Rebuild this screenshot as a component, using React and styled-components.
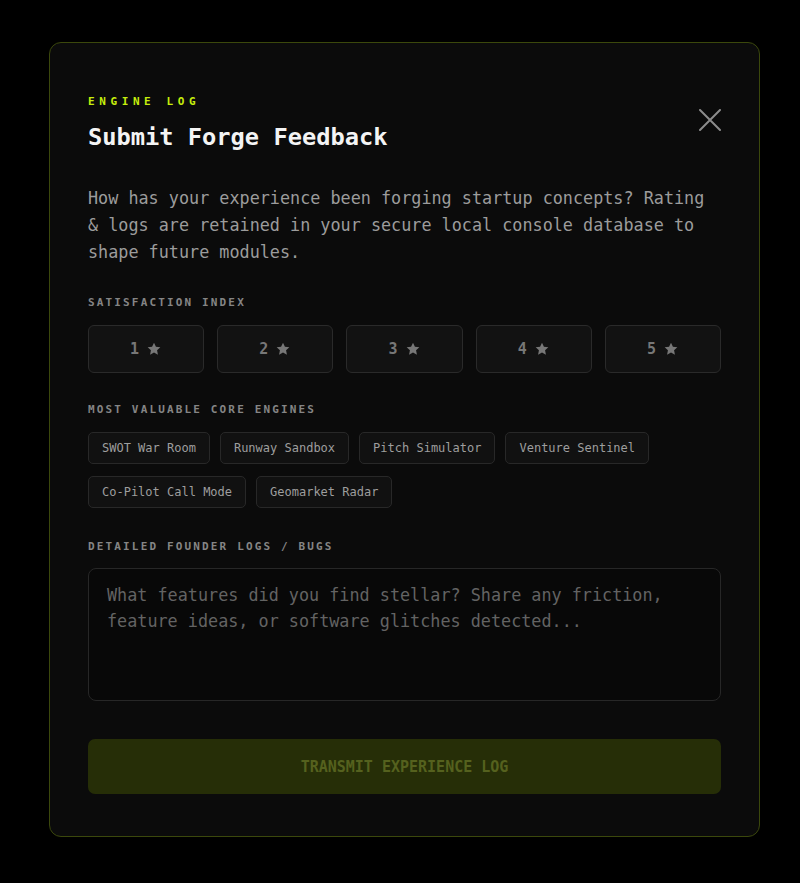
import styled, { createGlobalStyle } from 'styled-components';

const GlobalStyle = createGlobalStyle`
  body {
    margin: 0;
    background: #000;
    font-family: "DejaVu Sans Mono", "Liberation Mono", monospace;
  }
`;

const ratings = [1, 2, 3, 4, 5];
const engines = [
  'SWOT War Room',
  'Runway Sandbox',
  'Pitch Simulator',
  'Venture Sentinel',
  'Co-Pilot Call Mode',
  'Geomarket Radar',
];

function Estrela() {
  return (
    <svg width="16" height="16" viewBox="0 0 24 24">
      <path
        d="M12 2.5l2.9 6.1 6.6.8-4.9 4.6 1.3 6.6L12 17.3l-5.9 3.3 1.3-6.6-4.9-4.6 6.6-.8z"
        fill="currentColor"
      />
    </svg>
  );
}

export default function App() {
  return (
    <>
      <GlobalStyle />
      <Pagina>
        <Cartao>
          <Cabecalho>
            <div>
              <Rotulo>ENGINE LOG</Rotulo>
              <Titulo>Submit Forge Feedback</Titulo>
            </div>
            <Fechar aria-label="Fechar">
              <svg width="22" height="22" viewBox="0 0 22 22" fill="none">
                <path d="M1 1L21 21M21 1L1 21" stroke="#8c8c8c" strokeWidth="2" strokeLinecap="round" />
              </svg>
            </Fechar>
          </Cabecalho>

          <Descricao>
            How has your experience been forging startup concepts? Rating &amp; logs are retained in
            your secure local console database to shape future modules.
          </Descricao>

          <Secao>
            <Legenda>SATISFACTION INDEX</Legenda>
            <Notas>
              {ratings.map((n) => (
                <Nota key={n}>
                  <span>{n}</span>
                  <Estrela />
                </Nota>
              ))}
            </Notas>
          </Secao>

          <Secao>
            <Legenda>MOST VALUABLE CORE ENGINES</Legenda>
            <Chips>
              {engines.map((e) => (
                <Chip key={e}>{e}</Chip>
              ))}
            </Chips>
          </Secao>

          <Secao topo={31} gap={13}>
            <Legenda>DETAILED FOUNDER LOGS / BUGS</Legenda>
            <Campo placeholder="What features did you find stellar? Share any friction, feature ideas, or software glitches detected..." />
          </Secao>

          <Enviar disabled>TRANSMIT EXPERIENCE LOG</Enviar>
        </Cartao>
      </Pagina>
    </>
  );
}

const Pagina = styled.div`
  padding: 42px 0 46px 49px;
`;

const Cartao = styled.div`
  box-sizing: border-box;
  width: 711px;
  padding: 51px 38px 42px;
  background: #0b0b0b;
  border: 1px solid #3b480c;
  border-radius: 12px;
  display: flex;
  flex-direction: column;
`;

const Cabecalho = styled.div`
  display: flex;
  justify-content: space-between;
  align-items: flex-start;
`;

const Rotulo = styled.div`
  font-size: 11px;
  line-height: 16px;
  font-weight: bold;
  letter-spacing: 4.6px;
  color: #c6ee0c;
`;

const Titulo = styled.h1`
  margin: 11px 0 0;
  font-size: 23.7px;
  line-height: 32px;
  font-weight: bold;
  color: #f4f4f4;
`;

const Fechar = styled.button`
  margin-top: 15px;
  padding: 0;
  background: none;
  border: none;
  display: flex;
  cursor: pointer;
`;

const Descricao = styled.p`
  margin: 32px 0 0;
  font-size: 16.8px;
  line-height: 27px;
  color: #9c9c9c;
`;

const Secao = styled.div`
  margin-top: ${({ topo }) => topo || 29}px;
  display: flex;
  flex-direction: column;
  gap: ${({ gap }) => gap || 14}px;
`;

const Legenda = styled.div`
  font-size: 11px;
  line-height: 16px;
  font-weight: bold;
  letter-spacing: 2.15px;
  color: #858585;
`;

const Notas = styled.div`
  display: grid;
  grid-template-columns: repeat(5, 1fr);
  gap: 13px;
`;

const Nota = styled.button`
  height: 48px;
  background: #121212;
  border: 1px solid #2a2a2a;
  border-radius: 6px;
  font-family: inherit;
  font-size: 15px;
  font-weight: bold;
  color: #777;
  display: flex;
  align-items: center;
  justify-content: center;
  gap: 7px;
`;

const Chips = styled.div`
  display: flex;
  flex-wrap: wrap;
  gap: 12px 10px;
`;

const Chip = styled.span`
  box-sizing: border-box;
  height: 32px;
  padding: 0 13px;
  display: flex;
  align-items: center;
  background: #111;
  border: 1px solid #282828;
  border-radius: 5px;
  font-size: 12px;
  color: #9e9e9e;
`;

const Campo = styled.textarea`
  box-sizing: border-box;
  width: 100%;
  height: 133px;
  padding: 13px 18px;
  background: #080808;
  border: 1px solid #272727;
  border-radius: 8px;
  resize: none;
  font-family: inherit;
  font-size: 16.8px;
  line-height: 26px;
  color: #ddd;
  outline: none;

  &::placeholder {
    color: #636363;
  }
`;

const Enviar = styled.button`
  margin-top: 38px;
  height: 55px;
  background: #262e07;
  border: none;
  border-radius: 7px;
  font-family: inherit;
  font-size: 15px;
  font-weight: bold;
  color: #55611e;
`;
